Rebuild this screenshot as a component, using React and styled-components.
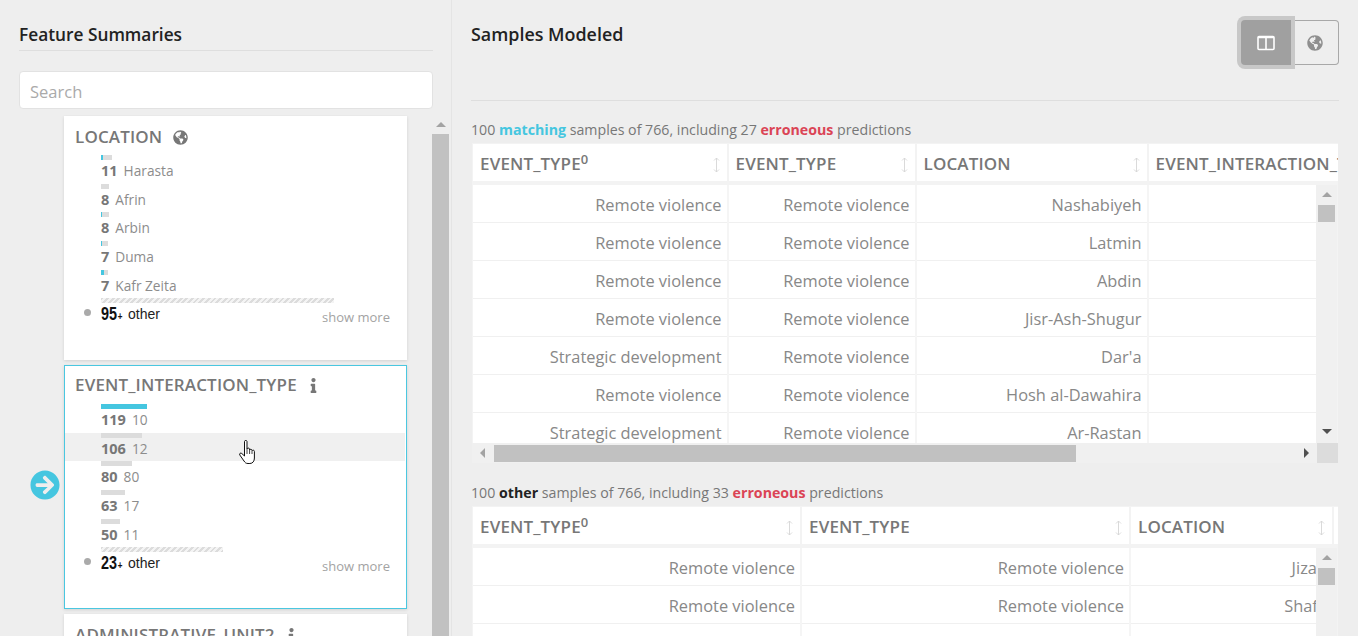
import React from "react";
import styled, { createGlobalStyle } from "styled-components";
import { FaGlobeAmericas, FaInfo, FaArrowCircleRight } from "react-icons/fa";

const summaries = [
	{
		name: "LOCATION",
		icon: "globe",
		otherCount: 95,
		otherWidth: 233,
		rows: [
			{ count: 11, label: "Harasta", width: 11, hit: 2 },
			{ count: 8, label: "Afrin", width: 8, hit: 0 },
			{ count: 8, label: "Arbin", width: 8, hit: 1 },
			{ count: 7, label: "Duma", width: 7, hit: 1 },
			{ count: 7, label: "Kafr Zeita", width: 7, hit: 3 },
		],
	},
	{
		name: "EVENT_INTERACTION_TYPE",
		icon: "info",
		selected: true,
		otherCount: 23,
		otherWidth: 122,
		rows: [
			{ count: 119, label: "10", width: 46, hit: 46 },
			{ count: 106, label: "12", width: 41, hit: 0, hover: true },
			{ count: 80, label: "80", width: 31, hit: 0 },
			{ count: 63, label: "17", width: 24, hit: 0 },
			{ count: 50, label: "11", width: 19, hit: 0 },
		],
	},
];

const firstRows = [
	["Remote violence", "Remote violence", "Nashabiyeh"],
	["Remote violence", "Remote violence", "Latmin"],
	["Remote violence", "Remote violence", "Abdin"],
	["Remote violence", "Remote violence", "Jisr-Ash-Shugur"],
	["Strategic development", "Remote violence", "Dar'a"],
	["Remote violence", "Remote violence", "Hosh al-Dawahira"],
	["Strategic development", "Remote violence", "Ar-Rastan"],
];

const secondRows = [
	["Remote violence", "Remote violence", "Jizan"],
	["Remote violence", "Remote violence", "Shafa"],
	["", "", ""],
];

const GlobalStyle = createGlobalStyle`
	html, body {
		margin: 0;
		height: 100%;
		overflow: hidden;
		background: #eeeeee;
		font-family: "Open Sans", "Liberation Sans", sans-serif;
	}
`;

const SortIcon = () => (
	<SortGlyph width="9" height="16" viewBox="0 0 9 16" fill="none" stroke="#d6d6d6" strokeWidth="0.9">
		<path d="M4.500 1v14M2 3.500L4.500 1 7 3.500M2 12.500L4.500 15 7 12.500" />
	</SortGlyph>
);

const HandCursor = () => (
	<svg width="18" height="24" viewBox="0 0 18 24">
		<path
			d="M5.500 1.500c0-1.400 2.500-1.400 2.500 0V9c.2-1.200 2.400-1.200 2.600 0v1c.3-1 2.200-1 2.400.2v.6c.4-1 2.400-.8 2.400.6V18c0 3-1.500 5.500-4.500 5.500H9c-2.200 0-3-1-4-2.500L.8 15c-.8-1.400.8-2.600 2-1.500L5.500 16z"
			fill="#fff"
			stroke="#111"
			strokeWidth="1"
			strokeLinejoin="round"
		/>
		<path d="M8 9v5M10.600 10v4M13 11v3" stroke="#111" strokeWidth="0.8" fill="none" />
	</svg>
);

const SummaryCard = ({ summary }) => (
	<Card $selected={summary.selected}>
		{summary.selected && (
			<PointerArrow>
				<FaArrowCircleRight size={30} />
			</PointerArrow>
		)}
		<CardTitle $lift={summary.selected}>
			{summary.name}
			{summary.icon === "globe" ? (
				<TitleIcon>
					<FaGlobeAmericas />
				</TitleIcon>
			) : (
				<TitleIcon $info>
					<FaInfo />
				</TitleIcon>
			)}
		</CardTitle>
		<Rows>
			{summary.rows.map((row, i) => (
				<Row key={i} $hover={row.hover}>
					<Bar style={{ width: row.width }}>
						<BarHit style={{ width: row.hit }} />
					</Bar>
					<RowText>
						<b>{row.count}</b>
						{row.label}
					</RowText>
					{row.hover && (
						<Cursor>
							<HandCursor />
						</Cursor>
					)}
				</Row>
			))}
			<OtherRow>
				<OtherBar style={{ width: summary.otherWidth }} />
				<OtherText>
					<OtherDot />
					<OtherCount>
						{summary.otherCount}
						<small>+</small>
					</OtherCount>
					<OtherLabel>other</OtherLabel>
					<ShowMore>show more</ShowMore>
				</OtherText>
			</OtherRow>
		</Rows>
	</Card>
);

const SampleTable = ({ columns, headers, rows, height, thumb }) => (
	<TableFrame>
		<HeaderRow $columns={columns}>
			{headers.map((h, i) => (
				<HeaderCell key={i}>
					<span>
						{h.label}
						{h.sup && <sup>{h.sup}</sup>}
					</span>
					{h.sort && <SortIcon />}
				</HeaderCell>
			))}
		</HeaderRow>
		<TableBody $height={height}>
			<BodyRows>
				{rows.map((row, i) => (
					<BodyRow key={i} $columns={columns}>
						{row.map((text, j) => (
							<BodyCell key={j}>{text}</BodyCell>
						))}
						<BodyCell />
					</BodyRow>
				))}
			</BodyRows>
			<VScroll>
				<ArrowUp />
				<VThumb />
				{thumb && <ArrowDown />}
			</VScroll>
		</TableBody>
		{thumb && (
			<HScroll>
				<ArrowLeft />
				<HThumb />
				<ArrowRight />
				<ScrollCorner />
			</HScroll>
		)}
	</TableFrame>
);

const App = () => (
	<Page>
		<GlobalStyle />
		<LeftPanel>
			<PanelTitle>Feature Summaries</PanelTitle>
			<SearchBox placeholder="Search" />
			<ListArea>
				<CardList>
					{summaries.map((s) => (
						<SummaryCard key={s.name} summary={s} />
					))}
					<Card>
						<CardTitle>
							ADMINISTRATIVE_UNIT2
							<TitleIcon $info>
								<FaInfo />
							</TitleIcon>
						</CardTitle>
					</Card>
				</CardList>
				<ListScroll>
					<ArrowUp />
					<ListThumb />
				</ListScroll>
			</ListArea>
		</LeftPanel>
		<RightPanel>
			<TopBar>
				<RightTitle>Samples Modeled</RightTitle>
				<Toggle>
					<ToggleActive>
						<svg width="18" height="16" viewBox="0 0 18 16" fill="none" stroke="#fff" strokeWidth="1.600">
							<rect x="1" y="1.500" width="16" height="13" rx="1" />
							<path d="M9 1.500v13" />
							<path d="M1 2.500h16" strokeWidth="1.500" />
						</svg>
					</ToggleActive>
					<ToggleIdle>
						<FaGlobeAmericas size={16} />
					</ToggleIdle>
				</Toggle>
			</TopBar>
			<Caption>
				100 <Matching>matching</Matching> samples of 766, including 27 <Erroneous>erroneous</Erroneous> predictions
			</Caption>
			<SampleTable
				columns="253.5px 186px 230px 300px"
				height={258}
				thumb
				rows={firstRows}
				headers={[
					{ label: "EVENT_TYPE", sup: "0", sort: true },
					{ label: "EVENT_TYPE", sort: true },
					{ label: "LOCATION", sort: true },
					{ label: "EVENT_INTERACTION_TYPE" },
				]}
			/>
			<SecondCaption>
				100 <Other>other</Other> samples of 766, including 33 <Erroneous>erroneous</Erroneous> predictions
			</SecondCaption>
			<SampleTable
				columns="327px 327px 201px 300px"
				height={100}
				rows={secondRows}
				headers={[
					{ label: "EVENT_TYPE", sup: "0", sort: true },
					{ label: "EVENT_TYPE", sort: true },
					{ label: "LOCATION", sort: true },
					{ label: "" },
				]}
			/>
		</RightPanel>
	</Page>
);

const Page = styled.div`
	display: flex;
	width: 1358px;
	height: 636px;
	overflow: hidden;
	color: #777;
`;

const LeftPanel = styled.div`
	width: 452px;
	flex: none;
	box-sizing: border-box;
	border-right: 1px solid #e4e4e4;
	padding: 22px 0 0 19px;
	display: flex;
	flex-direction: column;
`;

const PanelTitle = styled.div`
	width: 414px;
	height: 28px;
	border-bottom: 1px solid #dedede;
	font-size: 17.3px;
	font-weight: 600;
	line-height: 26px;
	color: #222;
`;

const SearchBox = styled.input`
	width: 414px;
	height: 38px;
	box-sizing: border-box;
	margin-top: 20px;
	padding: 3px 10px 0;
	border: 1px solid #e2e2e2;
	border-radius: 4px;
	background: #fff;
	font-family: inherit;
	font-size: 16.5px;
	outline: none;

	&::placeholder {
		color: #aaa;
		opacity: 1;
	}
`;

const ListArea = styled.div`
	flex: 1;
	min-height: 0;
	margin-top: 6px;
	display: flex;
	overflow: hidden;
`;

const CardList = styled.div`
	width: 343px;
	margin-left: 45px;
	padding-top: 1px;
	display: flex;
	flex-direction: column;
	gap: 5px;
`;

const Card = styled.div`
	position: relative;
	flex: none;
	height: 244px;
	box-sizing: border-box;
	background: #fff;
	padding-top: 9px;
	border: 1px solid ${(p) => (p.$selected ? "#4ac7e0" : "#fff")};
	box-shadow: 0 1px 3px rgba(0, 0, 0, 0.12);
`;

const PointerArrow = styled.div`
	position: absolute;
	left: -35px;
	top: 104px;
	color: #45c6e0;
	line-height: 0;
`;

const CardTitle = styled.div`
	margin-top: ${(p) => (p.$lift ? "-1px" : "0")};
	padding: ${(p) => (p.$lift ? "0 0 1px 10px" : "0 0 0 10px")};
	font-size: 17px;
	font-weight: 600;
	letter-spacing: 0.15px;
	line-height: 22px;
	color: #777;
	display: flex;
	align-items: center;
`;

const TitleIcon = styled.span`
	margin-left: ${(p) => (p.$info ? "9px" : "11px")};
	display: inline-flex;
	color: #777;

	svg {
		width: auto;
		height: 15px;
	}
`;

const Rows = styled.div`
	margin-top: 7px;
`;

const Row = styled.div`
	position: relative;
	height: 28.67px;
	margin-right: 1px;
	box-sizing: border-box;
	padding-left: 36px;
	background: ${(p) => (p.$hover ? "#f0f0f0" : "transparent")};
`;

const Bar = styled.div`
	height: 5px;
	background: #dcdcdc;
`;

const BarHit = styled.div`
	height: 5px;
	background: #45c6e0;
`;

const RowText = styled.div`
	padding-top: 1px;
	font-size: 13.7px;
	line-height: 20px;
	color: #8c8c8c;

	b {
		margin-right: 6px;
		font-size: 14.5px;
		font-weight: 700;
		color: #777;
	}
`;

const Cursor = styled.div`
	position: absolute;
	left: 174px;
	top: 7px;
	line-height: 0;
`;

const OtherRow = styled.div`
	padding-left: 36px;
`;

const OtherBar = styled.div`
	height: 5px;
	background: repeating-linear-gradient(135deg, #dcdcdc 0 2px, #f4f4f4 2px 4px);
`;

const OtherText = styled.div`
	position: relative;
	display: flex;
	align-items: center;
	height: 22px;
	line-height: 20px;
`;

const OtherDot = styled.span`
	position: absolute;
	left: -17px;
	top: 6px;
	width: 7px;
	height: 7px;
	border-radius: 50%;
	background: #aaa;
`;

const OtherCount = styled.span`
	display: inline-block;
	width: 21px;
	padding-top: 2px;
	font-family: "Liberation Sans", sans-serif;
	font-size: 18px;
	font-weight: 700;
	color: #111;
	transform: scaleX(0.8);
	transform-origin: left;
	white-space: nowrap;

	small {
		margin-left: 1px;
		font-size: 10px;
	}
`;

const OtherLabel = styled.span`
	margin-left: 6px;
	font-family: "Liberation Sans", sans-serif;
	font-size: 14px;
	color: #222;
`;

const ShowMore = styled.span`
	position: absolute;
	right: 16px;
	top: 4px;
	font-size: 13px;
	color: #a3a3a3;
`;

const ListScroll = styled.div`
	width: 17px;
	margin-left: 25px;
	flex: none;
	display: flex;
	flex-direction: column;
	align-items: center;
	background: #eeeeee;
`;

const ListThumb = styled.div`
	flex: 1;
	width: 17px;
	margin-top: 7px;
	background: #c1c1c1;
`;

const ArrowUp = styled.div`
	flex: none;
	margin-top: 7px;
	width: 0;
	height: 0;
	border-left: 5px solid transparent;
	border-right: 5px solid transparent;
	border-bottom: 5px solid #a3a3a3;
`;

const ArrowDown = styled.div`
	flex: none;
	margin-top: auto;
	margin-bottom: 9px;
	width: 0;
	height: 0;
	border-left: 5px solid transparent;
	border-right: 5px solid transparent;
	border-top: 5px solid #505050;
`;

const RightPanel = styled.div`
	flex: 1;
	padding: 20px 19px 0 19px;
	min-width: 0;
`;

const TopBar = styled.div`
	display: flex;
	justify-content: space-between;
	height: 80px;
	border-bottom: 1px solid #dedede;
`;

const RightTitle = styled.div`
	font-size: 17.9px;
	font-weight: 600;
	line-height: 28px;
	color: #222;
`;

const Toggle = styled.div`
	display: flex;
	height: 45px;
`;

const ToggleActive = styled.div`
	position: relative;
	z-index: 1;
	width: 50px;
	height: 45px;
	display: flex;
	align-items: center;
	justify-content: center;
	border-radius: 4px 0 0 4px;
	background: #a0a0a0;
	box-shadow: 0 0 0 4px #c8c8c8;
`;

const ToggleIdle = styled.div`
	width: 48px;
	height: 45px;
	box-sizing: border-box;
	display: flex;
	align-items: center;
	justify-content: center;
	border: 1px solid #a8a8a8;
	border-left: none;
	border-radius: 0 4px 4px 0;
	color: #8f8f8f;
`;

const Caption = styled.div`
	margin-top: 20px;
	height: 22px;
	font-size: 14.2px;
	line-height: 18px;
	color: #777;
`;

const SecondCaption = styled(Caption)`
	height: 23px;
	line-height: 20px;
`;

const Matching = styled.b`
	color: #45c6e0;
`;

const Erroneous = styled.b`
	color: #db4455;
`;

const Other = styled.b`
	color: #222;
`;

const TableFrame = styled.div`
	margin-left: 1px;
	width: 866px;
	background: #f3f3f3;
	overflow: hidden;
`;

const HeaderRow = styled.div`
	display: grid;
	grid-template-columns: ${(p) => p.$columns};
	gap: 2px;
	padding: 1px 0 0 1px;
	height: 38px;
	box-sizing: content-box;
`;

const HeaderCell = styled.div`
	height: 37px;
	box-sizing: border-box;
	background: #fff;
	padding: 2px 7px 0;
	display: flex;
	align-items: center;
	justify-content: space-between;
	font-size: 17px;
	font-weight: 600;
	letter-spacing: 0.15px;
	color: #777;
	white-space: nowrap;
	overflow: hidden;

	sup {
		font-size: 13px;
		line-height: 0;
		vertical-align: 6px;
	}
`;

const SortGlyph = styled.svg`
	flex: none;
	margin: 3px -1px 0 0;
`;

const TableBody = styled.div`
	display: flex;
	margin-top: 3px;
	height: ${(p) => p.$height}px;
	overflow: hidden;
`;

const BodyRows = styled.div`
	width: 844px;
	padding-left: 1px;
	box-sizing: border-box;
	overflow: hidden;
`;

const BodyRow = styled.div`
	display: grid;
	grid-template-columns: ${(p) => p.$columns};
	gap: 2px;
	height: 38px;
	box-sizing: border-box;
	background: #fff;
	border-bottom: 1px solid #f0f0f0;
`;

const BodyCell = styled.div`
	position: relative;
	padding: 1px 5px 0 0;
	text-align: right;
	font-size: 16.4px;
	line-height: 38px;
	color: #888;
	white-space: nowrap;

	&::after {
		content: "";
		position: absolute;
		top: 0;
		bottom: 0;
		right: -2px;
		width: 2px;
		background: #f5f5f5;
	}
`;

const VScroll = styled.div`
	width: 21px;
	flex: none;
	display: flex;
	flex-direction: column;
	align-items: center;
	background: #f0f0f0;
`;

const VThumb = styled.div`
	width: 17px;
	height: 17px;
	margin-top: 8px;
	background: #c1c1c1;
`;

const HScroll = styled.div`
	height: 20px;
	display: flex;
	align-items: center;
	background: #f0f0f0;
`;

const ArrowLeft = styled.div`
	margin-left: 8px;
	width: 0;
	height: 0;
	border-top: 5px solid transparent;
	border-bottom: 5px solid transparent;
	border-right: 5px solid #a3a3a3;
`;

const HThumb = styled.div`
	width: 582px;
	height: 17px;
	margin-left: 9px;
	background: #c1c1c1;
`;

const ArrowRight = styled.div`
	margin-left: auto;
	margin-right: 8px;
	width: 0;
	height: 0;
	border-top: 5px solid transparent;
	border-bottom: 5px solid transparent;
	border-left: 5px solid #505050;
`;

const ScrollCorner = styled.div`
	width: 21px;
	height: 20px;
	background: #dcdcdc;
`;

export default App;
